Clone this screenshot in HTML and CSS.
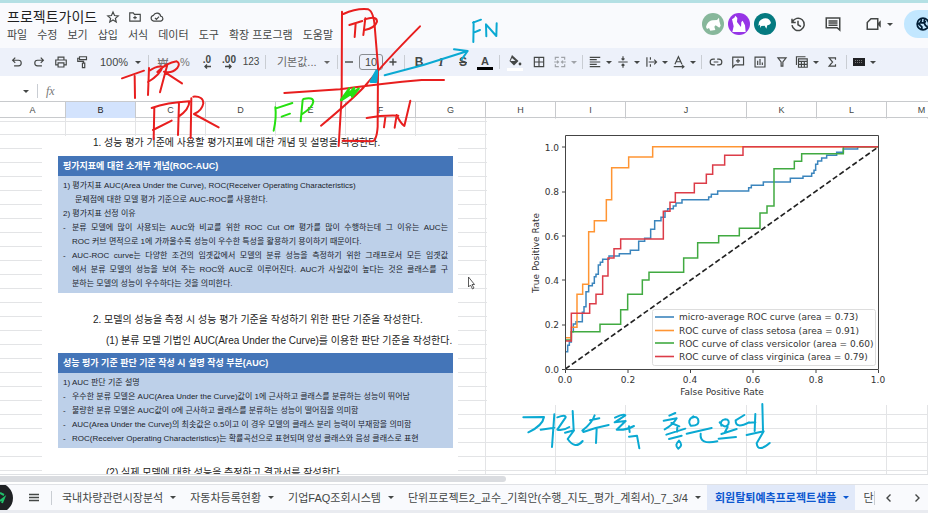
FILE: index.html
```html
<!DOCTYPE html>
<html lang="ko">
<head>
<meta charset="utf-8">
<meta name="viewport" content="width=device-width, initial-scale=1">
<title>프로젝트가이드</title>
<link rel="stylesheet" href="styles.css">
</head>
<body>
<header class="top">
  <div class="top-left">
    <div class="title-row">
      <h1>프로젝트가이드</h1>
      <button class="ib" aria-label="별표"><svg width="14" height="14" viewBox="0 0 24 24"><path d="M12 3.500l2.600 6 6.400.6-4.900 4.200 1.500 6.300-5.600-3.400-5.600 3.400 1.500-6.300L3 10.100l6.400-.6z" class="ln"/></svg></button>
      <button class="ib" aria-label="이동"><svg width="14" height="14" viewBox="0 0 24 24"><path d="M3 19V5h6l2 2.500h10V19zM12 10v6M9 13h6" class="ln"/></svg></button>
      <button class="ib" aria-label="저장됨"><svg width="14" height="14" viewBox="0 0 24 24"><path d="M6.500 19a5 5 0 0 1-.5-9.900A6.500 6.500 0 0 1 18.300 10.500 4.300 4.300 0 0 1 18.500 19zM8.500 13.500l2.500 2.500 4.500-4.500" class="ln"/></svg></button>
    </div>
    <nav class="menu">
      <a href="#">파일</a><a href="#">수정</a><a href="#">보기</a><a href="#">삽입</a><a href="#">서식</a><a href="#">데이터</a><a href="#">도구</a><a href="#">확장 프로그램</a><a href="#">도움말</a>
    </nav>
  </div>
  <div class="top-right">
    <div class="avatars">
      <svg width="22" height="22" viewBox="0 0 66 66"><circle cx="33" cy="33" r="33" fill="#87b79b"/><path d="M12 42c3-10 8-18 20-20l13-1 6-7 1 10 4 14-4 6-11-7-4 4 3 10-15 2-4-8-6 3z" fill="#fff"/></svg>
      <svg width="22" height="22" viewBox="0 0 66 66"><circle cx="33" cy="33" r="33" fill="#9634e6"/><path d="M12 19l7-5 3-6 6 7-1 12 12 15 1-15 4-4 7 14 2 20H13l4-17z" fill="#fff"/></svg>
      <svg width="22" height="22" viewBox="0 0 66 66"><circle cx="33" cy="33" r="33" fill="#057a80"/><path d="M15 27c4-7 10-11 19-11s15 6 17 14l-5 5-6 2-3 10-5-9-10 1-3 6-1-10-5 3z" fill="#fff"/></svg>
    </div>
    <button class="ib big" aria-label="기록"><svg width="18" height="18" viewBox="0 0 24 24"><path d="M4 5v5h5M4.500 9.500a8.200 8.200 0 1 1-.5 4M12 7.500V13l4 2.500" class="ln"/></svg></button>
    <button class="ib big" aria-label="댓글"><svg width="18" height="18" viewBox="0 0 24 24"><path d="M3 4h18v16l-3.500-3H3zM6 8h12M6 10.800h12M6 13.600h12" class="ln"/></svg></button>
    <button class="ib big meet" aria-label="통화"><svg width="18" height="18" viewBox="0 0 24 24"><path d="M8 5h9v14H3V10z" class="ln"/><path d="M17 11l4-4v10l-4-4z" fill="#444746"/></svg><i class="caret"></i></button>
    <button class="share" aria-label="공유"><svg width="14" height="14" viewBox="0 0 24 24"><circle cx="12" cy="12" r="10" class="globe"/><path d="M3 10l7 7v5M9 3v4l-2 3h7l2 4 3 3M15 3l-1 4 3 2" class="globe"/></svg></button>
  </div>
</header>

<div class="toolbar" role="toolbar">
  <button class="tb" aria-label="실행취소"><svg width="14" height="14" viewBox="0 0 24 24"><path d="M9 4.500L4.500 9 9 13.500M5 9h9.500a4.700 4.700 0 0 1 0 9.500H7" class="ln"/></svg></button>
  <button class="tb" aria-label="재실행"><svg width="14" height="14" viewBox="0 0 24 24"><path d="M15 4.500L19.500 9 15 13.500M19 9H9.500a4.700 4.700 0 0 0 0 9.500H17" class="ln"/></svg></button>
  <button class="tb" aria-label="인쇄"><svg width="14" height="14" viewBox="0 0 24 24"><path d="M7 8V3.500h10V8M7 17H3V8.500h18V17h-4M7 13.500h10v7H7z" class="ln"/></svg></button>
  <button class="tb" aria-label="서식 복사"><svg width="14" height="14" viewBox="0 0 24 24"><path d="M6 3h12v5H6zM6 5.500H3V11h10v3M11 14h4v7.500h-4z" class="ln"/></svg></button>
  <label class="pick zoom"><select aria-label="확대/축소"><option>100%</option></select><i class="caret"></i></label>
  <i class="sep"></i>
  <button class="tb soft">₩</button><button class="tb soft">%</button>
  <button class="tb dec">.0<svg width="8" height="5" viewBox="0 0 8 5"><path d="M8 2.500H2M4 .5l-2 2 2 2" class="ln thin"/></svg></button>
  <button class="tb dec">.00<svg width="8" height="5" viewBox="0 0 8 5"><path d="M0 2.500h6M4 .5l2 2-2 2" class="ln thin"/></svg></button>
  <button class="tb num">123</button>
  <i class="sep"></i>
  <label class="pick font"><select aria-label="글꼴"><option>기본값...</option></select><i class="caret"></i></label>
  <i class="sep"></i>
  <button class="tb slim" aria-label="작게"><svg width="10" height="10" viewBox="0 0 10 10"><path d="M1 5h8" class="ln thin"/></svg></button>
  <input class="size" aria-label="글꼴 크기" value="10">
  <button class="tb slim" aria-label="크게"><svg width="10" height="10" viewBox="0 0 10 10"><path d="M1.500 5h7M5 1.500v7" class="ln thin"/></svg></button>
  <i class="sep"></i>
  <button class="tb bold">B</button><button class="tb bold ital">I</button><button class="tb bold strike">S</button><button class="tb under"><span>A</span></button>
  <i class="sep"></i>
  <button class="tb wide" aria-label="채우기"><svg width="18" height="18" viewBox="0 0 18 18"><path d="M6 2l6.500 6L8 12.500 3.500 8z" fill="#444746"/><path d="M6 5l3.500 3h-5z" fill="#edf1fa"/><circle cx="14" cy="11" r="1.400" fill="#444746"/><path d="M1 15h16v3H1z" fill="#fff"/></svg></button>
  <button class="tb wide" aria-label="테두리"><svg width="14" height="14" viewBox="0 0 24 24"><path d="M4 4h16v16H4zM12 4v16M4 12h16" class="ln"/></svg></button>
  <button class="tb group faded" aria-label="병합"><svg width="14" height="14" viewBox="0 0 24 24"><path d="M10 4H4v4M14 4h6v4M10 20H4v-4M14 20h6v-4M2 12h7M7 9.500L9.500 12 7 14.500M22 12h-7M17 9.500L14.500 12l2.500 2.500" class="ln"/></svg><i class="caret"></i></button>
  <i class="sep"></i>
  <button class="tb group" aria-label="가로 정렬"><svg width="14" height="14" viewBox="0 0 24 24"><path d="M3 4h18M3 8h12M3 12h18M3 16h12M3 20h18" class="ln"/></svg><i class="caret"></i></button>
  <button class="tb group" aria-label="세로 정렬"><svg width="14" height="14" viewBox="0 0 24 24"><path d="M4 12h16M12 2v6M9.500 6L12 8.500 14.500 6M12 22v-6M9.500 18l2.500-2.500 2.500 2.500" class="ln"/></svg><i class="caret"></i></button>
  <button class="tb group" aria-label="줄바꿈"><svg width="14" height="14" viewBox="0 0 24 24"><path d="M5 4v16M11 4v4M11 16v4M8 12h13M17.500 8l4 4-4 4" class="ln"/></svg><i class="caret"></i></button>
  <button class="tb group" aria-label="회전"><svg width="14" height="14" viewBox="0 0 24 24"><path d="M5 16l6-13 6 13M7.500 11.500h7M3 20h17M17 17l3.500 3-3.500 3" class="ln"/></svg><i class="caret"></i></button>
  <i class="sep"></i>
  <button class="tb" aria-label="링크"><svg width="14" height="14" viewBox="0 0 24 24"><path d="M10 7H7a5 5 0 0 0 0 10h3M14 7h3a5 5 0 0 1 0 10h-3M8 12h8" class="ln"/></svg></button>
  <button class="tb" aria-label="댓글 추가"><svg width="14" height="14" viewBox="0 0 24 24"><path d="M3 3.500h18.500V17H7l-4 4zM12 6.500v7M8.500 10h7" class="ln"/></svg></button>
  <button class="tb" aria-label="차트"><svg width="14" height="14" viewBox="0 0 24 24"><path d="M3.500 3.500h17v17h-17zM8 10v7M12 7v10M16 13v4" class="ln"/></svg></button>
  <button class="tb" aria-label="필터"><svg width="14" height="14" viewBox="0 0 24 24"><path d="M5 5h14l-5.500 7v7h-3v-7z" class="ln"/></svg></button>
  <button class="tb group" aria-label="표"><svg width="14" height="14" viewBox="0 0 24 24"><path d="M2.500 17V3H18M6 6.500h15V21H6zM6 11h15M6 16h15M11 11v10M16 11v10" class="ln"/></svg><i class="caret"></i></button>
  <button class="tb" aria-label="함수"><svg width="14" height="14" viewBox="0 0 24 24"><path d="M18 8V5H7l6 7-6 7h11v-3" class="ln"/></svg></button>
  <i class="sep"></i>
  <button class="tb group key" aria-label="입력 도구"><svg width="14" height="10" viewBox="0 0 14 10"><rect x="1" y="1" width="12" height="8" fill="#202124"/><path d="M3 3.500h8M3 5.500h8" stroke="#777" stroke-dasharray="1 1"/></svg><i class="caret"></i></button>
</div>

<div class="formula"><i class="caret"></i><i class="sep"></i><label for="fx">fx</label><input id="fx" type="text"></div>

<div class="cols">
  <span>A</span><span class="sel">B</span><span>C</span><span>D</span><span>E</span><span>F</span><span>G</span><span>H</span><span>I</span><span>J</span><span>K</span><span>L</span><span>M</span>
</div>

<main class="sheet">
  <div class="cells" aria-hidden="true"><i></i><i></i><i></i><i></i><i></i><i></i><i></i><i></i><i></i><i></i><i></i><i></i><i></i></div>
  <article class="doc">
    <p class="h">1. 성능 평가 기준에 사용할 평가지표에 대한 개념 및 설명을 작성한다.</p>
    <section class="box">
      <h2>평가지표에 대한 소개부 개념(ROC-AUC)</h2>
      <div class="lines">
        <p>1) 평가지표 AUC(Area Under the Curve), ROC(Receiver Operating Characteristics)</p>
        <p class="in2">문제점에 대한 모델 평가 기준으로 AUC-ROC를 사용한다.</p>
        <p>2) 평가지표 선정 이유</p>
        <p class="dash full">분류 모델에 많이 사용되는 AUC와 비교를 위한 ROC Cut Off 평가를 많이 수행하는데 그 이유는 AUC는</p>
        <p class="in">ROC 커브 면적으로 1에 가까울수록 성능이 우수한 특성을 활용하기 용이하기 때문이다.</p>
        <p class="dash full">AUC-ROC curve는 다양한 조건의 임곗값에서 모델의 분류 성능을 측정하기 위한 그래프로서 모든 임곗값</p>
        <p class="in full">에서 분류 모델의 성능을 보여 주는 ROC와 AUC로 이루어진다. AUC가 사실값이 높다는 것은 클래스를 구</p>
        <p class="in">분하는 모델의 성능이 우수하다는 것을 의미한다.</p>
      </div>
    </section>
    <div class="mid">
      <p class="h">2. 모델의 성능을 측정 시 성능 평가 기준을 작성하기 위한 판단 기준을 작성한다.</p>
      <p class="h sub">(1) 분류 모델 기법인 AUC(Area Under the Curve)를 이용한 판단 기준을 작성한다.</p>
    </div>
    <section class="box">
      <h2>성능 평가 기준 판단 기준 작성 시 설명 작성 부분(AUC)</h2>
      <div class="lines">
        <p>1) AUC 판단 기준 설명</p>
        <p class="dash">우수한 분류 모델은 AUC(Area Under the Curve)값이 1에 근사하고 클래스를 분류하는 성능이 뛰어남</p>
        <p class="dash">불량한 분류 모델은 AUC값이 0에 근사하고 클래스를 분류하는 성능이 떨어짐을 의미함</p>
        <p class="dash">AUC(Area Under the Curve)의 최솟값은 0.5이고 이 경우 모델의 클래스 분리 능력이 부재함을 의미함</p>
        <p class="dash">ROC(Receiver Operating Characteristics)는 확률곡선으로 표현되며 양성 클래스와 음성 클래스로 표현</p>
      </div>
    </section>
    <p class="h sub last">(2) 실제 모델에 대한 성능을 측정하고 결과서를 작성한다.</p>
  </article>
  <figure class="chart">
    <svg viewBox="487 119 441 286" role="img" aria-label="ROC curve">
      <g transform="translate(510 125) scale(.33333)" fill="none" stroke-width="4.500">
        <path d="M166 732L1106 65" stroke="#222" stroke-width="5" stroke-dasharray="16 8"/>
        <path stroke="#3b85bd" d="M166 680H173V661H178V651H184V620H190V597H198V590H217V562H222V545H228V500H236V482H247V475H253V455H258V448H265V420H271V412H278V403H297V393H328V386H361V376H386V349H404V340H422V313H434V287H453V277H465V259H473V251H490V243H498V234H516V224H596V216H604V208H623V198H716V188H724V181H760V171H841V160H879V154H905V145H912V136H917V118H923V108H935V99H950V91H980V82H1000V72H1043V65H1106"/>
        <path stroke="#ff9533" d="M166 638H184V607H201V508H218V478H236V320H253V287H289V224H305V128H356V96H428V65H1106"/>
        <path stroke="#41aa41" d="M166 645H184V620H270V598H332V554H353V508H397V465H417V442H521V399H563V353H626V332H688V310H750V264H771V243H792V131H853V109H875V86H1000V65H1106"/>
        <path stroke="#dc3c48" d="M166 648H184V565H239V536H258V508H278V453H294V399H312V371H332V342H460V259H480V232H496V203H553V175H589V148H608V120H644V91H699V65H1106"/>
      </g>
      <path class="axis" d="M565.500 135.500h313v234h-313zM562 147h3M562 192h3M562 236h3M562 280h3M562 325h3M562 369.500h3M565.500 370v3M628 370v3M690.500 370v3M753 370v3M816 370v3M878.500 370v3"/>
      <g class="tick end"><text x="559" y="151">1.0</text><text x="559" y="195">0.8</text><text x="559" y="240">0.6</text><text x="559" y="284">0.4</text><text x="559" y="328">0.2</text><text x="559" y="373">0.0</text></g>
      <g class="tick mid-a"><text x="565" y="383">0.0</text><text x="628" y="383">0.2</text><text x="690" y="383">0.4</text><text x="753" y="383">0.6</text><text x="816" y="383">0.8</text><text x="878" y="383">1.0</text><text x="722" y="395">False Positive Rate</text><text transform="translate(539 253) rotate(-90)">True Positive Rate</text></g>
      <rect x="652.500" y="309.500" width="223" height="56" rx="2" fill="#fff" stroke="#ddd"/>
      <g stroke-width="1.600"><path d="M655 317h19" stroke="#3b85bd"/><path d="M655 330.500h19" stroke="#ff9533"/><path d="M655 343h19" stroke="#41aa41"/><path d="M655 356.500h19" stroke="#dc3c48"/></g>
      <g class="tick"><text x="679" y="320">micro-average ROC curve (area = 0.73)</text><text x="679" y="334">ROC curve of class setosa (area = 0.91)</text><text x="679" y="347">ROC curve of class versicolor (area = 0.60)</text><text x="679" y="360">ROC curve of class virginica (area = 0.79)</text></g>
    </svg>
  </figure>
</main>

<div class="scroll"><i></i></div>
<footer class="tabs">
  <svg class="pen" width="13" height="30" viewBox="0 0 13 30"><circle cx="-2" cy="15" r="15" fill="#1f2124"/><path d="M0 18l4-3-2 5M0 10l4 2" stroke="#20c06a" stroke-width="2" fill="none"/></svg>
  <button class="all" aria-label="모든 시트"><svg width="10" height="9" viewBox="0 0 10 9"><path d="M0 1.500h10M0 4.500h10M0 7.500h10" class="ln thin"/></svg></button>
  <i class="sep"></i>
  <button class="tab">국내차량관련시장분석<i class="caret"></i></button><button class="tab">자동차등록현황<i class="caret"></i></button><button class="tab">기업FAQ조회시스템<i class="caret"></i></button><button class="tab">단위프로젝트2_교수_기획안(수행_지도_평가_계획서)_7_3/4<i class="caret"></i></button><button class="tab on">회원탈퇴예측프로젝트샘플<i class="caret"></i></button><button class="tab cut">단</button>
  <div class="arrows"><i class="sep"></i><button aria-label="이전"><svg width="10" height="10" viewBox="0 0 10 10"><path d="M6.500 1.500L3 5l3.500 3.500" class="ln thin"/></svg></button><button aria-label="다음"><svg width="10" height="10" viewBox="0 0 10 10"><path d="M3.500 1.500L7 5 3.500 8.500" class="ln thin"/></svg></button></div>
</footer>

<svg class="ink" width="928" height="513" viewBox="0 0 928 513" aria-hidden="true">
  <g class="red" transform="scale(.33333)">
    <path d="M366 235L432 212M404 228L405 294M447 204L444 285M444 246Q480 225 488 200Q470 196 447 213M502 194L480 277M472 216Q500 188 530 184Q542 190 532 204Q515 222 492 215L546 250"/>
    <path d="M455 324Q500 308 568 304M463 322L461 418M459 390L515 362M537 308L534 405M568 304Q568 328 536 350M574 295L572 415M580 290Q610 288 610 310Q606 332 582 342L656 382"/>
  </g>
  <g class="red" transform="translate(240) scale(.33333)">
    <path d="M306 35L305 290L296 438M310 42Q350 24 385 28Q402 35 405 90L414 200L413 380Q410 425 395 424L308 422"/>
    <path d="M328 75L367 63M347 70L344 111M376 55L370 105M374 58Q412 46 411 65Q405 84 374 90M540 79Q430 190 375 258Q330 305 243 377M133 279L300 268Q430 250 545 240H612M380 354Q430 345 475 347M436 352L432 382M464 383L470 345Q480 368 493 378L511 302"/>
  </g>
  <g class="cyan" transform="translate(240) scale(.33333)">
    <path d="M434 226L550 195L683 153M642 148L683 153L665 178M701 66L700 126M699 68L723 59M701 98L720 90M739 109L738 73L769 108L770 70"/>
    <path d="M410 212L392 245H408L411 214L398 244" stroke-width="8"/>
  </g>
  <g class="green" transform="translate(240) scale(.33333)">
    <path d="M106 322Q110 350 101 392M108 325L157 309M125 350L150 341M188 300L182 364M190 297Q220 290 220 305Q218 322 187 342"/>
    <path d="M303 300L328 265L318 292L342 264L336 290L356 266L305 300" stroke-width="7"/>
  </g>
  <g class="cyan" transform="translate(500 395) scale(.33333)">
    <path d="M70 67L132 66Q128 92 85 112M122 104L163 98M163 58L156 156"/>
    <path d="M172 67Q198 58 197 67L172 104Q190 108 208 96M218 48L221 105M195 113L222 106L203 132Q226 165 248 138"/>
    <path d="M284 61Q277 84 247 107M270 76L298 70M250 111Q288 97 326 90M290 101L288 144"/>
    <path d="M345 68Q372 55 376 61L344 82L377 78L350 104Q378 106 402 93M387 94L389 111M387 125L411 122L418 160"/>
    <path d="M508 62L526 54M491 77L530 70Q518 91 494 103M514 84L538 94M532 96L531 110M499 119L556 101M507 132L545 122M537 137Q522 150 535 161Q551 150 537 137"/>
    <path d="M580 64Q560 76 572 92Q601 93 594 72Q588 63 577 68M560 116L635 99M602 116Q598 151 652 139"/>
    <path d="M659 82Q674 103 685 88Q690 74 676 73Q658 76 664 92M683 96L675 111M656 131L708 126M664 117L710 102"/>
    <path d="M733 60L707 76Q706 103 747 82M747 83L766 82M766 57L764 108M787 27L789 105M740 120L791 109L770 145Q774 174 809 144"/>
  </g>
  <path d="M468.500 277v10l2-2 2 4 1.500-1-2-3.500h2.500z" fill="#fff" stroke="#333" stroke-width=".8"/>
</svg>
</body>
</html>
```
FILE: styles.css
```css
* { box-sizing: border-box; }
html, body { height: 100%; }
body {
  margin: 0;
  position: relative;
  display: flex;
  flex-direction: column;
  overflow: hidden;
  background: #fff;
  color: #444746;
  font: 11px/14px "Liberation Sans", "Noto Sans CJK KR", sans-serif;
}
h1, h2, p, figure { margin: 0; font-weight: 400; }
button, input, select {
  margin: 0;
  padding: 0;
  border: 0;
  background: none;
  color: inherit;
  font: inherit;
  outline: 0;
}
select { appearance: none; }
a { color: inherit; text-decoration: none; }
svg { display: block; flex: none; }
.ln { fill: none; stroke: #444746; stroke-width: 2; }
.thin { stroke-width: 1.4px; }
.caret {
  flex: none;
  border: 3px solid transparent;
  border-top-color: currentColor;
  border-bottom: 0;
}
.sep { flex: none; width: 1px; margin: 0 3px; height: 14px; background: #c9cdd3; }

.top {
  flex: none;
  display: flex;
  justify-content: space-between;
  height: 48px;
  border-top: 3px solid #b4e0e4;
  background: #f9fafd;
}
.top-left { padding: 4px 0 0 7px; }
.title-row { display: flex; align-items: center; height: 20px; }
h1 { margin-right: 5px; color: #1f1f1f; font-size: 14px; line-height: 20px; }
.ib { width: 22px; display: flex; align-items: center; justify-content: center; }
.menu { display: flex; gap: 10px; padding-top: 1px; }
.top-right { display: flex; align-items: center; height: 42px; }
.avatars { display: flex; gap: 4px; margin-right: 4px; }
.big { width: 35px; }
.meet { width: 43px; gap: 4px; justify-content: flex-end; }
.share {
  width: 24px;
  height: 28px;
  margin-left: 11px;
  padding-left: 12px;
  overflow: hidden;
  border-radius: 14px 0 0 14px;
  background: #c2e7ff;
}
.globe { fill: none; stroke: #001d35; stroke-width: 3; }

.toolbar {
  flex: none;
  display: flex;
  align-items: center;
  height: 28px;
  padding-left: 6px;
  background: #edf1fa;
}
.tb {
  flex: none;
  display: flex;
  align-items: center;
  justify-content: center;
  width: 22px;
  height: 22px;
}
.soft { color: #777; }
.dec { flex-direction: column; font-size: 10px; font-weight: 700; line-height: 9px; }
.num { font-size: 10px; }
.pick { display: flex; align-items: center; justify-content: space-between; padding: 0 4px 0 6px; }
.zoom { width: 51px; }
.font { width: 65px; padding-left: 8px; color: #666; }
.slim { width: 16px; }
.size { width: 24px; height: 16px; margin: 0 2px; border: 1px solid #8a8d91; border-radius: 3px; text-align: center; }
.bold { font-size: 12px; font-weight: 700; }
.ital { font-style: italic; font-family: "Liberation Serif", serif; }
.strike { text-decoration: line-through; }
.under span { width: 16px; border-bottom: 3px solid #000; line-height: 12px; font-weight: 700; }
.wide { width: 24px; }
.group { width: 28px; gap: 4px; }
.faded { opacity: .45; }
.key { width: 28px; }

.formula { flex: none; display: flex; align-items: center; height: 25px; padding: 5px 0 0 23px; }
.formula .sep { margin: 0 8px; }
.formula label { color: #777; font: italic 12px "Liberation Serif", serif; }
.formula input { flex: 1; margin-left: 8px; }

.cols, .cells { display: grid; grid-template-columns: 66px repeat(8, 70px) 121px repeat(2, 70px) 1fr; }
.cols {
  flex: none;
  height: 17px;
  border: solid #c8cacd;
  border-width: 1px 0;
  font-size: 9px;
  line-height: 16px;
  text-align: center;
}
.cols span { border-right: 1px solid #c8cacd; }
.cols .sel { background: #d3e3fd; color: #1f1f1f; }
.cols span:last-child { padding-left: 28px; border: 0; }

.sheet { position: relative; flex: 1; min-height: 0; overflow: hidden; display: flex; }
.cells {
  position: absolute;
  inset: 0;
  background: repeating-linear-gradient(#fff 0 13px, #e3e4e6 13px 14px) 0 3px;
}
.cells::before { content: ""; position: absolute; top: 3px; left: 0; right: 0; height: 1px; background: #e3e4e6; }
.cells i { border-right: 1px solid #e3e4e6; }
.doc {
  position: relative;
  flex: none;
  width: 416px;
  margin: 18px 29px 0 42px;
  padding-right: 5px;
  background: #fff;
  color: #20242c;
  font-size: 8px;
  white-space: nowrap;
}
.h { padding-left: 51px; font-size: 10px; color: #222; }
.sub { padding-left: 64px; }
.box { margin: 6px 0 0 16px; background: #bdd0e9; }
.box h2 { height: 20px; padding-left: 5px; background: #4475b8; color: #fff; font-size: 9px; font-weight: 700; line-height: 21px; }
.lines { padding: 3px 5px 2px; }
.in { padding-left: 9px; }
.in2 { padding-left: 12px; }
.dash { display: flex; }
.dash::before { content: "-"; width: 9px; }
.full { display: block; white-space: normal; text-align: justify; text-align-last: justify; }
.dash.full { padding-left: 9px; text-indent: -9px; }
.dash.full::before { display: inline-block; text-indent: 0; text-align-last: left; }
.mid { display: grid; gap: 7px; padding-top: 20px; }
.mid + .box { margin-top: 5px; }
.last { padding-top: 18px; }
.chart { position: relative; flex: 1; }
.chart svg { width: 100%; margin-top: 1px; background: #fff; }
.axis { fill: none; stroke: #444; }
.tick { fill: #333; font: 9px "DejaVu Sans", sans-serif; }
.end { text-anchor: end; }
.mid-a { text-anchor: middle; }

.scroll { flex: none; height: 10px; padding: 1px 0; border-top: 1px solid #dfe1e4; }
.scroll i { display: block; width: 506px; height: 6px; border-radius: 0 3px 3px 0; background: #dadce0; }
.tabs {
  flex: none;
  display: flex;
  align-items: center;
  height: 29px;
  overflow: hidden;
  border-top: 1px solid #e0e2e6;
  border-bottom: 3px solid #e9ebf0;
  background: #f9fafd;
}
.all { flex: none; width: 42px; height: 25px; padding-left: 21px; }
.pen { width: 13px; margin-right: -5px; }
.tabs > .sep { margin: 0 2px 0 1px; }
.tab { flex: none; display: flex; align-items: center; gap: 7px; height: 25px; padding: 0 6px 0 8px; white-space: nowrap; }
.on { background: #e1e9f9; color: #0b57d0; font-weight: 700; }
.cut { padding-right: 0; }
.arrows { display: flex; align-items: center; margin-left: auto; }
.arrows .sep { margin: 0; }
.arrows button { width: 28px; display: flex; justify-content: center; }

.ink { position: absolute; top: 0; left: 0; pointer-events: none; }
.ink g { fill: none; stroke-width: 6px; stroke-linecap: round; stroke-linejoin: round; }
.red { stroke: #e81e1e; }
.cyan { stroke: #0aa9d2; }
.green { stroke: #25e010; }
```
